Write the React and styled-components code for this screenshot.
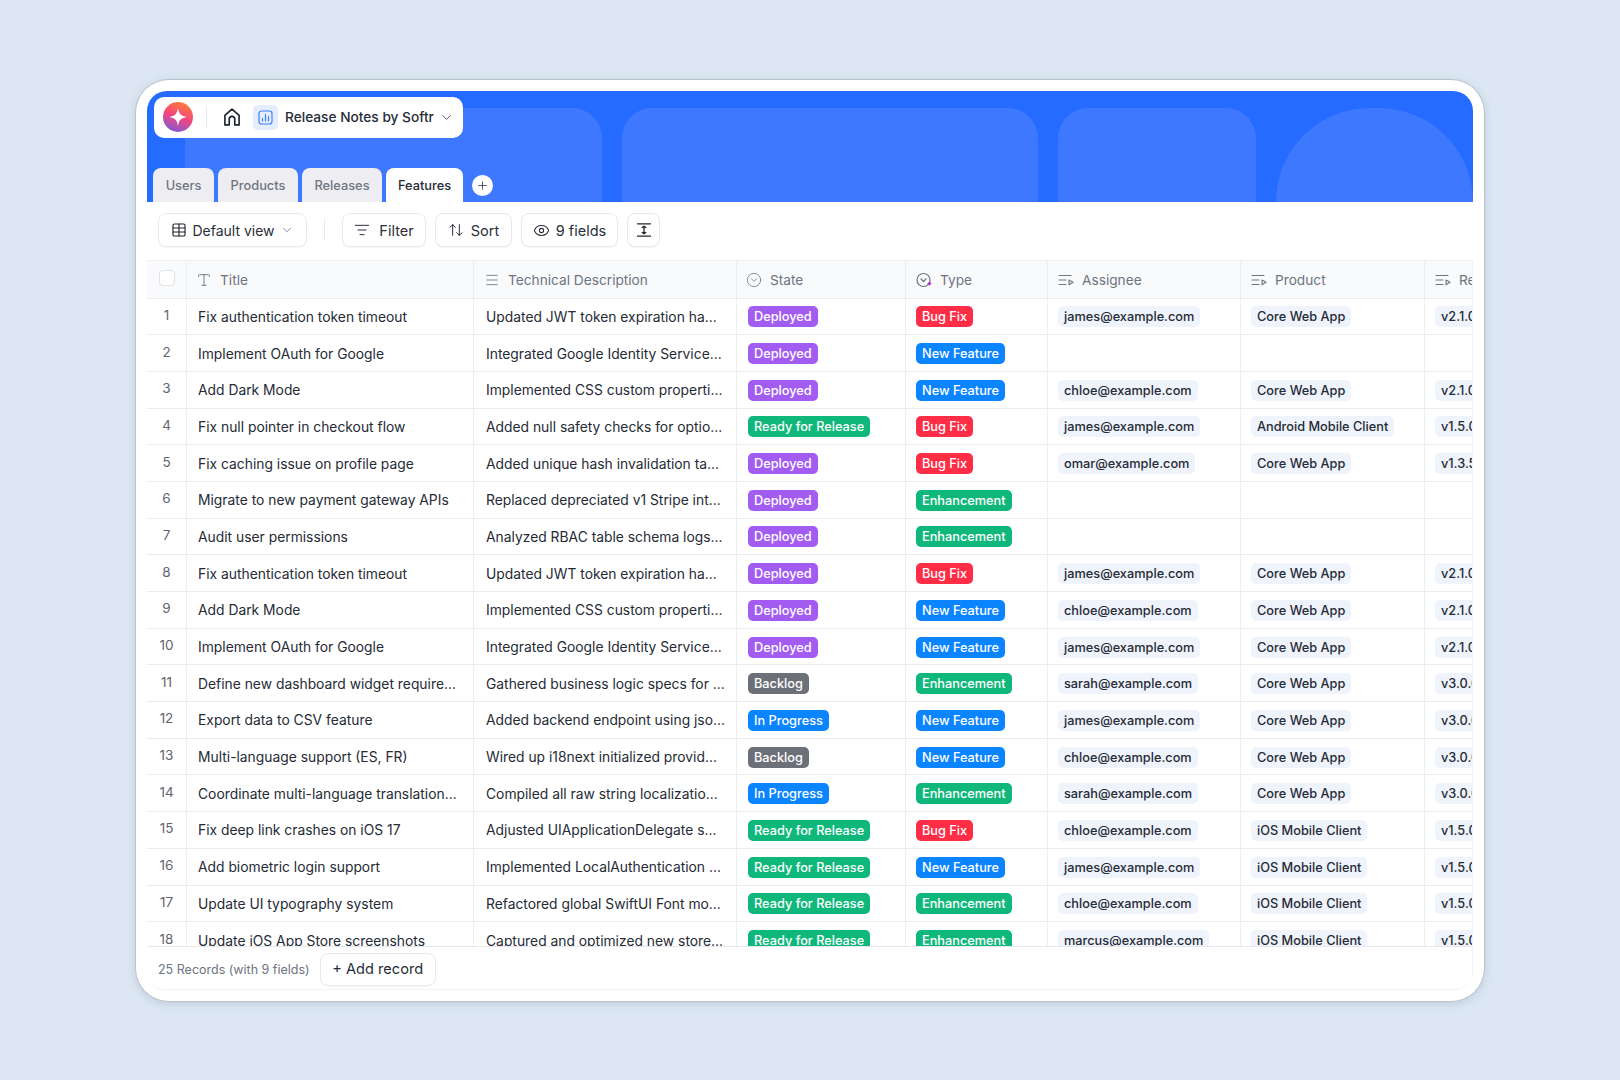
import React from 'react';
import styled, { createGlobalStyle } from 'styled-components';
import { ChevronDown, Plus, Table, ListFilter, ArrowUpDown, Eye, Type, Menu, CircleChevronDown } from 'lucide-react';

const GlobalStyle = createGlobalStyle`
  html, body { margin: 0; padding: 0; }
  body { background: #dce7f3; font-family: Inter, "Liberation Sans", sans-serif; color: #1f2937; }
  * { box-sizing: border-box; }
`

const Page = styled.div`
  width: 100%;
  min-height: 100vh;
  display: flex;
  justify-content: center;
  align-items: center;
`
const Card = styled.div`
  width: 1350px;
  height: 923px;
  padding: 11px;
  background: #fff;
  border: 1px solid #bcc2cb;
  border-radius: 34px;
  box-shadow: 0 2px 8px rgba(90, 110, 140, 0.22);
  display: flex;
  flex-direction: column;
`
const Inner = styled.div`
  flex: 1;
  min-height: 0;
  display: flex;
  flex-direction: column;
  border-radius: 20px 20px 18px 18px;
  overflow: hidden;
  border-bottom: 1px solid #f1f3f6;
`
const Banner = styled.div`
  position: relative;
  height: 111px;
  flex-shrink: 0;
  background: #256bff;
  padding: 6px 0 0 6px;
  display: flex;
  flex-direction: column;
  justify-content: space-between;
  overflow: hidden;
`
const Shapes = styled.div`
  position: absolute;
  inset: 17px 0 0 38px;
  display: flex;
  gap: 20px;
`
const Shape = styled.div`
  width: ${p => p.$w}px;
  background: #3d78ff;
  border-radius: ${p => p.$r}px ${p => p.$r}px 0 0;
`
const AppPill = styled.div`
  position: relative;
  width: 309px;
  height: 41px;
  margin-left: 1px;
  background: #fff;
  border-radius: 10px;
  display: flex;
  align-items: center;
  padding-left: 9px;
`
const Logo = styled.div`
  width: 30px;
  height: 30px;
  border-radius: 50%;
  background: linear-gradient(200deg, #ff8a26 0%, #f4477c 48%, #6a5ce8 100%);
  display: flex;
  align-items: center;
  justify-content: center;
`
const PillDivider = styled.div`
  width: 1px;
  height: 21px;
  margin: 0 15px 0 13px;
  background: #e7e8ec;
`
const HomeIcon = styled.svg`
  width: 20px;
  height: 20px;
  margin-right: 11px;
  color: #1f2430;
`
const AppTile = styled.div`
  width: 25px;
  height: 25px;
  border-radius: 5px;
  background: #e5edfc;
  display: flex;
  align-items: center;
  justify-content: center;
  margin-right: 7px;
`
const AppName = styled.span`
  font-size: 13.7px;
  font-weight: 500;
  color: #262b36;
  white-space: nowrap;
  margin-right: 5px;
`
const TabRow = styled.div`
  position: relative;
  display: flex;
  align-items: flex-end;
  gap: 4px;
`
const Tab = styled.div`
  width: ${p => p.$w}px;
  height: 34px;
  padding-top: 1px;
  border-radius: 8px 8px 0 0;
  background: ${p => (p.$active ? '#fff' : '#eeeef2')};
  color: ${p => (p.$active ? '#262b36' : '#70757f')};
  font-size: 12.8px;
  font-weight: 500;
  display: flex;
  align-items: center;
  justify-content: center;
`
const AddTab = styled.div`
  width: 21px;
  height: 21px;
  margin: 0 0 6px 5px;
  border-radius: 50%;
  background: #fff;
  color: #3b4250;
  display: flex;
  align-items: center;
  justify-content: center;
`
const Toolbar = styled.div`
  height: 58px;
  flex-shrink: 0;
  display: flex;
  align-items: center;
  padding: 0 0 1px 11px;
  gap: 9px;
`
const ToolButton = styled.div`
  width: ${p => p.$w}px;
  height: 34px;
  border: 1px solid #e8e9ed;
  border-radius: 8px;
  box-shadow: 0 1px 1px rgba(30, 40, 60, 0.04);
  background: #fff;
  color: #2a2f3a;
  font-size: ${p => p.$size || 14.5}px;
  display: flex;
  align-items: center;
  justify-content: center;
  gap: ${p => p.$gap || 6}px;
`
const ToolDivider = styled.div`
  width: 1px;
  height: 22px;
  margin: 0 8px;
  background: #e8e9ed;
`
const TableArea = styled.div`
  flex: 1;
  min-height: 0;
  overflow: hidden;
  border-top: 1px solid #eff0f3;
  border-right: 1px solid #f1f3f6;
  border-bottom: 1px solid #e6e8ec;
`
const Row = styled.div`
  display: grid;
  grid-template-columns: 40px 287px 263px 169px 142px 193px 184px 120px;
  height: ${p => (p.$head ? '38px' : '36.7px')};
  background: ${p => (p.$head ? '#f9fafc' : '#fff')};
  border-bottom: 1px solid #e9ebee;
`
const Cell = styled.div`
  display: flex;
  align-items: center;
  padding-top: 1px;
  padding-left: ${p => p.$pad || 11}px;
  border-right: 1px solid #eceef1;
  white-space: nowrap;
  overflow: hidden;
  font-size: 13.85px;
  color: #262b36;
`
const HeadCell = styled(Cell)`
  gap: ${p => p.$gap || 8}px;
  font-size: 13.7px;
  color: #6e7480;
  svg { flex-shrink: 0; }
`
const NumberCell = styled.div`
  display: flex;
  justify-content: center;
  align-items: center;
  padding-bottom: 3px;
  border-right: 1px solid #eceef1;
  font-size: 13.5px;
  color: #5f6570;
`
const CheckBox = styled.div`
  width: 16px;
  height: 16px;
  margin: auto;
  background: #fff;
  border: 1px solid #dfe2e7;
  border-radius: 4px;
`
const Badge = styled.span`
  display: inline-block;
  height: 21px;
  line-height: 21px;
  padding: 0 6px;
  border-radius: 5px;
  background: ${p => p.$bg};
  color: #fff;
  font-size: 12.75px;
  font-weight: 500;
`
const LinkChip = styled.span`
  display: inline-block;
  height: 21px;
  line-height: 21px;
  padding: 0 6px;
  border-radius: 5px;
  background: #eff3fb;
  color: #262b36;
  font-size: 12.75px;
  font-weight: 500;
`
const Footer = styled.div`
  height: 42px;
  flex-shrink: 0;
  display: flex;
  align-items: center;
  padding: 3px 0 0 11px;
  gap: 10px;
  border-right: 1px solid #f1f3f6;
`
const RecordCount = styled.span`
  font-size: 12.5px;
  color: #6e7480;
`
const AddRecord = styled.div`
  width: 116px;
  height: 33px;
  border: 1px solid #e8e9ed;
  border-radius: 8px;
  box-shadow: 0 1px 1px rgba(30, 40, 60, 0.04);
  display: flex;
  align-items: center;
  justify-content: center;
  font-size: 14.6px;
  color: #262b36;
`

const stateColors = {
  Deployed: '#a35cf2',
  'Ready for Release': '#0fb87a',
  Backlog: '#6c7079',
  'In Progress': '#0a84ff',
};
const typeColors = {
  'Bug Fix': '#ff2d45',
  'New Feature': '#0a84ff',
  Enhancement: '#0fb87a',
};

const rows = [
  ['Fix authentication token timeout', 'Updated JWT token expiration ha...', 'Deployed', 'Bug Fix', 'james@example.com', 'Core Web App', 'v2.1.0'],
  ['Implement OAuth for Google', 'Integrated Google Identity Service...', 'Deployed', 'New Feature'],
  ['Add Dark Mode', 'Implemented CSS custom properti...', 'Deployed', 'New Feature', 'chloe@example.com', 'Core Web App', 'v2.1.0'],
  ['Fix null pointer in checkout flow', 'Added null safety checks for optio...', 'Ready for Release', 'Bug Fix', 'james@example.com', 'Android Mobile Client', 'v1.5.0'],
  ['Fix caching issue on profile page', 'Added unique hash invalidation ta...', 'Deployed', 'Bug Fix', 'omar@example.com', 'Core Web App', 'v1.3.5'],
  ['Migrate to new payment gateway APIs', 'Replaced depreciated v1 Stripe int...', 'Deployed', 'Enhancement'],
  ['Audit user permissions', 'Analyzed RBAC table schema logs...', 'Deployed', 'Enhancement'],
  ['Fix authentication token timeout', 'Updated JWT token expiration ha...', 'Deployed', 'Bug Fix', 'james@example.com', 'Core Web App', 'v2.1.0'],
  ['Add Dark Mode', 'Implemented CSS custom properti...', 'Deployed', 'New Feature', 'chloe@example.com', 'Core Web App', 'v2.1.0'],
  ['Implement OAuth for Google', 'Integrated Google Identity Service...', 'Deployed', 'New Feature', 'james@example.com', 'Core Web App', 'v2.1.0'],
  ['Define new dashboard widget require...', 'Gathered business logic specs for ...', 'Backlog', 'Enhancement', 'sarah@example.com', 'Core Web App', 'v3.0.0'],
  ['Export data to CSV feature', 'Added backend endpoint using jso...', 'In Progress', 'New Feature', 'james@example.com', 'Core Web App', 'v3.0.0'],
  ['Multi-language support (ES, FR)', 'Wired up i18next initialized provid...', 'Backlog', 'New Feature', 'chloe@example.com', 'Core Web App', 'v3.0.0'],
  ['Coordinate multi-language translation...', 'Compiled all raw string localizatio...', 'In Progress', 'Enhancement', 'sarah@example.com', 'Core Web App', 'v3.0.0'],
  ['Fix deep link crashes on iOS 17', 'Adjusted UIApplicationDelegate s...', 'Ready for Release', 'Bug Fix', 'chloe@example.com', 'iOS Mobile Client', 'v1.5.0'],
  ['Add biometric login support', 'Implemented LocalAuthentication ...', 'Ready for Release', 'New Feature', 'james@example.com', 'iOS Mobile Client', 'v1.5.0'],
  ['Update UI typography system', 'Refactored global SwiftUI Font mo...', 'Ready for Release', 'Enhancement', 'chloe@example.com', 'iOS Mobile Client', 'v1.5.0'],
  ['Update iOS App Store screenshots', 'Captured and optimized new store...', 'Ready for Release', 'Enhancement', 'marcus@example.com', 'iOS Mobile Client', 'v1.5.0'],
];

function LinkedIcon() {
  return (
    <svg width="16" height="16" viewBox="0 0 16 16" fill="none" stroke="currentColor" strokeWidth="1.1" strokeLinecap="round" strokeLinejoin="round">
      <path d="M1 3.5h12M1 8h7M1 12.5h7" />
      <path d="M11 8l4 2.3-4 2.4z" />
    </svg>
  )
}

function SparkTypeIcon() {
  return (
    <svg width="18" height="16" viewBox="0 0 18 16" fill="none">
      <circle cx="7.5" cy="8" r="6.5" stroke="currentColor" strokeWidth="1.2" />
      <path d="M5 7l2.5 2.5L10 7" stroke="currentColor" strokeWidth="1.2" strokeLinecap="round" strokeLinejoin="round" />
      <path d="M13.5 8.5c.3 2 .9 2.6 3 3-2.1.4-2.7 1-3 3-.3-2-.9-2.6-3-3 2.1-.4 2.7-1 3-3z" fill="#b02fc4" />
    </svg>
  )
}

function RowHeightIcon() {
  return (
    <svg width="16" height="16" viewBox="0 0 16 16" fill="none" stroke="#22262f" strokeWidth="1.3" strokeLinecap="round" strokeLinejoin="round">
      <path d="M1.5 1.8h13M1.5 14.2h13" />
      <path d="M8 4.2v7.6M6.2 5.6L8 4.2l1.8 1.4M6.2 10.4L8 11.8l1.8-1.4" />
    </svg>
  )
}

function App() {
  return (
    <Page>
      <GlobalStyle />
      <Card>
        <Inner>
          <Banner>
            <Shapes>
              <Shape $w={417} $r={30} />
              <Shape $w={416} $r={30} />
              <Shape $w={198} $r={30} />
              <Shape $w={197} $r={100} />
            </Shapes>
            <AppPill>
              <Logo>
                <svg width="20" height="20" viewBox="0 0 18 18">
                  <path d="M9 1c.7 5 2.6 7.2 8 8-5.4.8-7.3 3-8 8-.7-5-2.6-7.2-8-8 5.4-.8 7.3-3 8-8z" fill="#fff" />
                </svg>
              </Logo>
              <PillDivider />
              <HomeIcon viewBox="0 0 24 24" fill="none" stroke="currentColor" strokeWidth="2" strokeLinejoin="round">
                <path d="M3.5 21.5h5.2v-7a3.3 3.3 0 0 1 6.6 0v7h5.2V10L12 2.5 3.5 10z" />
              </HomeIcon>
              <AppTile>
                <svg width="15" height="15" viewBox="0 0 15 15" fill="none" stroke="#3b82f6" strokeWidth="1.2" strokeLinecap="round">
                  <rect x="1" y="1" width="13" height="13" rx="2.5" />
                  <path d="M4.5 11V8.5M7.5 11V4.5M10.5 11V6.5" />
                </svg>
              </AppTile>
              <AppName>Release Notes by Softr</AppName>
              <ChevronDown size={15} color="#4b5160" strokeWidth={1.5} />
            </AppPill>
            <TabRow>
              <Tab $w={61}>Users</Tab>
              <Tab $w={80}>Products</Tab>
              <Tab $w={80}>Releases</Tab>
              <Tab $w={77} $active>Features</Tab>
              <AddTab><Plus size={13} strokeWidth={1.6} /></AddTab>
            </TabRow>
          </Banner>
          <Toolbar>
            <ToolButton $w={149} $size={14} $gap={5}>
              <Table size={16} strokeWidth={1.7} color="#22262f" />
              Default view
              <ChevronDown size={14} strokeWidth={1.5} color="#7a808c" />
            </ToolButton>
            <ToolDivider />
            <ToolButton $w={84} $gap={9}><ListFilter size={16} strokeWidth={1.5} />Filter</ToolButton>
            <ToolButton $w={77} $gap={7}><ArrowUpDown size={16} strokeWidth={1.5} />Sort</ToolButton>
            <ToolButton $w={97}><Eye size={17} strokeWidth={1.5} />9 fields</ToolButton>
            <ToolButton $w={33}><RowHeightIcon /></ToolButton>
          </Toolbar>
          <TableArea>
            <Row $head>
              <NumberCell><CheckBox /></NumberCell>
              <HeadCell $pad={9}><Type size={16} strokeWidth={1.4} />Title</HeadCell>
              <HeadCell $pad={10}><Menu size={16} strokeWidth={1.3} />Technical Description</HeadCell>
              <HeadCell $pad={9}><CircleChevronDown size={16} strokeWidth={1.2} />State</HeadCell>
              <HeadCell $pad={10} $gap={6}><SparkTypeIcon />Type</HeadCell>
              <HeadCell $pad={10}><LinkedIcon />Assignee</HeadCell>
              <HeadCell $pad={10}><LinkedIcon />Product</HeadCell>
              <HeadCell $pad={10}><LinkedIcon />Release</HeadCell>
            </Row>
            {rows.map((r, i) => (
              <Row key={i}>
                <NumberCell>{i + 1}</NumberCell>
                <Cell>{r[0]}</Cell>
                <Cell $pad={12}>{r[1]}</Cell>
                <Cell $pad={11}><Badge $bg={stateColors[r[2]]}>{r[2]}</Badge></Cell>
                <Cell $pad={10}><Badge $bg={typeColors[r[3]]}>{r[3]}</Badge></Cell>
                <Cell $pad={10}>{r[4] && <LinkChip>{r[4]}</LinkChip>}</Cell>
                <Cell $pad={10}>{r[5] && <LinkChip>{r[5]}</LinkChip>}</Cell>
                <Cell $pad={10}>{r[6] && <LinkChip>{r[6]}</LinkChip>}</Cell>
              </Row>
            ))}
          </TableArea>
          <Footer>
            <RecordCount>25 Records (with 9 fields)</RecordCount>
            <AddRecord>+ Add record</AddRecord>
          </Footer>
        </Inner>
      </Card>
    </Page>
  )
}

export default App
